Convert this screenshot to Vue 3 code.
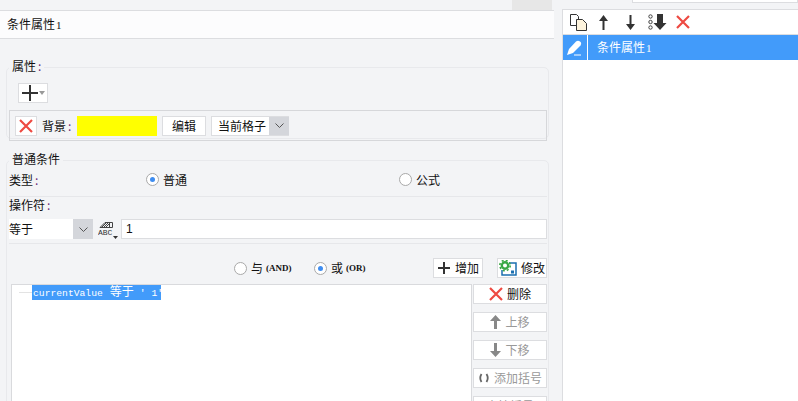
<script setup>
const tools = ['copy', 'up', 'down', 'bottom', 'del']
</script>

<template>
  <div class="page">
    <div class="top-strip">
      <div class="tab-shade"></div>
      <div class="top-box"></div>
    </div>
    <div class="main">
      <div class="left">
        <div class="title">条件属性<span class="num">1</span></div>
        <fieldset class="group attr">
          <legend>属性<span class="colon">:</span></legend>
          <button class="add-btn">
            <svg width="16" height="16" viewBox="0 0 16 16"><path d="M8 0v16M0 8h16" stroke="#333" stroke-width="2" fill="none"/></svg>
            <svg width="6" height="4" viewBox="0 0 6 4"><path d="M0 0h6L3 4z" fill="#999"/></svg>
          </button>
          <div class="bg-row">
            <span class="x-box">
              <svg width="14" height="14" viewBox="0 0 14 14"><path d="M1 1l12 12M13 1L1 13" stroke="#ee4a42" stroke-width="2.2" fill="none"/></svg>
            </span>
            <span class="bg-label">背景<span class="colon">:</span></span>
            <span class="swatch"></span>
            <span class="plain-btn">编辑</span>
            <span class="cell-select">
              <span class="cell-text">当前格子</span>
              <span class="chev">
                <svg width="9" height="5" viewBox="0 0 9 5"><path d="M.5.5l4 4 4-4" stroke="#555" fill="none"/></svg>
              </span>
            </span>
          </div>
        </fieldset>
        <fieldset class="group cond">
          <legend>普通条件</legend>
          <div class="type-row">
            <span class="type-label">类型<span class="colon">:</span></span>
            <label class="radio r-normal"><i class="dot on"></i>普通</label>
            <label class="radio r-formula"><i class="dot"></i>公式</label>
          </div>
          <div class="op-label">操作符<span class="colon">:</span></div>
          <div class="op-row">
            <span class="op-select">
              <span class="op-text">等于</span>
              <span class="chev op-chev">
                <svg width="9" height="5" viewBox="0 0 9 5"><path d="M.5.5l4 4 4-4" stroke="#555" fill="none"/></svg>
              </span>
            </span>
            <svg class="abc" width="21" height="20" viewBox="0 0 21 20">
              <path d="M2 8.500l5-5h7.500v5H2M4 8l4-4M6 8l4-4M8 8l4-4M11.500 3.500v5" stroke="#444" stroke-width="1" fill="none"/>
              <text x="0" y="16" class="abc-text">ABC</text>
              <path d="M15 17h5l-2.500 3z" fill="#333"/>
            </svg>
            <span class="op-input">1</span>
          </div>
          <div class="logic-row">
            <label class="radio r-and"><i class="dot"></i>与<span class="latin">(AND)</span></label>
            <label class="radio r-or"><i class="dot on"></i>或<span class="latin">(OR)</span></label>
            <span class="plain-btn act add">
              <svg width="14" height="14" viewBox="0 0 14 14"><path d="M7 1v12M1 7h12" stroke="#333" stroke-width="2" fill="none"/></svg>
              增加
            </span>
            <span class="plain-btn act edit">
              <svg width="18" height="16" viewBox="0 0 18 16">
                <path d="M10 3h7v12H3V10" stroke="#1b6fb0" stroke-width="1.500" fill="none"/>
                <circle cx="6" cy="5.500" r="3.200" fill="none" stroke="#3aa845" stroke-width="2.400"/>
                <circle cx="6" cy="5.500" r="5.200" fill="none" stroke="#3aa845" stroke-width="1.600" stroke-dasharray="2 2.100"/>
                <rect x="12" y="10.500" width="3" height="3" fill="#1b6fb0"/>
              </svg>
              修改
            </span>
          </div>
          <div class="tree-row">
            <div class="tree">
              <span class="tree-line"></span>
              <span class="tree-item"><span class="mono">currentValue</span><span class="cmp">等于</span><span class="mono">' 1'</span></span>
            </div>
            <div class="side">
              <span class="side-btn">
                <svg width="14" height="14" viewBox="0 0 14 14"><path d="M1 1l12 12M13 1L1 13" stroke="#ee4a42" stroke-width="2.200" fill="none"/></svg>
                删除
              </span>
              <span class="side-btn off">
                <svg width="11" height="14" viewBox="0 0 11 14"><path d="M5.500 0L11 6H7V14H4V6H0z" fill="#888"/></svg>
                上移
              </span>
              <span class="side-btn off">
                <svg width="11" height="14" viewBox="0 0 11 14"><path d="M5.500 14L11 8H7V0H4v8H0z" fill="#888"/></svg>
                下移
              </span>
              <span class="side-btn off">
                <svg width="12" height="10" viewBox="0 0 12 10"><path d="M3.500 1Q1 5 3.500 9M8.500 1q2.500 4 0 8" stroke="#666" stroke-width="1.800" fill="none"/></svg>
                添加括号
              </span>
              <span class="side-btn off clip">去掉括号</span>
            </div>
          </div>
        </fieldset>
      </div>
      <div class="right">
        <div class="toolbar">
          <template v-for="t in tools" :key="t">
            <svg v-if="t === 'copy'" class="tool t-copy" width="17" height="17" viewBox="0 0 17 17">
              <path d="M.5.500h6l2 2v9h-8z" fill="#fff" stroke="#333"/>
              <path d="M6.500 5.500h6l4 4v7h-10z" fill="#fdf3dc" stroke="#333"/>
            </svg>
            <svg v-else-if="t === 'up'" class="tool t-up" width="11" height="15" viewBox="0 0 11 15"><path d="M5.500 0L10 6H6.500V15h-2V6H1z" fill="#333"/></svg>
            <svg v-else-if="t === 'down'" class="tool t-down" width="11" height="15" viewBox="0 0 11 15"><path d="M5.500 15L10 9H6.500V0h-2v9H1z" fill="#333"/></svg>
            <svg v-else-if="t === 'bottom'" class="tool t-bottom" width="19" height="16" viewBox="0 0 19 16">
              <circle cx="2.500" cy="2.500" r="1.700" fill="none" stroke="#444"/>
              <circle cx="2.500" cy="8" r="1.700" fill="none" stroke="#444"/>
              <circle cx="2.500" cy="13.500" r="1.700" fill="none" stroke="#444"/>
              <path d="M12 16l6.500-7H15V0H9v9H5.500z" fill="#333"/>
            </svg>
            <svg v-else class="tool t-del" width="14" height="14" viewBox="0 0 14 14"><path d="M1 1l12 12M13 1L1 13" stroke="#ee4a42" stroke-width="2.200" fill="none"/></svg>
          </template>
        </div>
        <div class="list-row">
          <span class="pen">
            <svg width="16" height="16" viewBox="0 0 16 16">
              <path d="M0 15L2 9l7-7.500q2-1.500 4 0t.5 4L6 13z" fill="#fff"/>
              <path d="M7 15h7" stroke="#fff" stroke-width="1"/>
            </svg>
          </span>
          <span class="list-text">条件属性<span class="num">1</span></span>
        </div>
      </div>
    </div>
  </div>
</template>

<style scoped>
.page {
  width: 798px;
  height: 401px;
  overflow: hidden;
  background: #f3f4f6;
  font-family: "Noto Sans CJK SC", "Liberation Sans", sans-serif;
  font-size: 12px;
  color: #111;
  line-height: 14px;
}
.top-strip {
  height: 10px;
  display: flex;
  justify-content: flex-end;
  align-items: flex-start;
}
.tab-shade {
  width: 40px;
  height: 10px;
  background: #e7e7e7;
  margin-right: 80px;
}
.top-box {
  width: 166px;
  height: 3px;
  background: #fff;
  border: 1px solid #dcdde0;
  border-top: 0;
  box-sizing: border-box;
}
.main {
  display: flex;
  height: 391px;
}
.left {
  width: 554px;
  flex: none;
}
.title {
  height: 29px;
  box-sizing: border-box;
  background: #fcfcfd;
  border-top: 1px solid #dcdde0;
  border-bottom: 1px solid #dcdde0;
  padding: 0 0 0 7px;
  line-height: 25px;
}
.num {
  font-family: "Liberation Serif", serif;
  font-size: 11px;
  margin-left: 1px;
}
.colon {
  color: #6a2a7a;
  margin-left: 2px;
}
.group {
  margin: 0;
  padding: 0;
  border: 1px solid #e8e9ec;
  border-radius: 5px;
  min-inline-size: 0;
  box-sizing: border-box;
  width: 543px;
  margin-left: 6px;
}
.group legend {
  margin-left: 2px;
  padding: 0 3px;
  height: 16px;
  line-height: 14px;
}
.attr {
  margin-top: 20px;
  height: 80px;
}
.add-btn {
  width: 30px;
  height: 20px;
  margin: 8px 0 0 11px;
  padding: 0 0 0 3px;
  display: flex;
  align-items: center;
  gap: 1px;
  background: #fff;
  border: 1px solid #dcdde0;
  box-sizing: border-box;
}
.bg-row {
  margin: 7px 0 0 2px;
  width: 538px;
  height: 31px;
  box-sizing: border-box;
  border: 1px solid #d6d7da;
  display: flex;
  align-items: center;
  padding-left: 5px;
}
.x-box {
  width: 22px;
  height: 20px;
  box-sizing: border-box;
  background: #fff;
  border: 1px solid #dcdde0;
  display: flex;
  align-items: center;
  justify-content: center;
}
.bg-label {
  margin-left: 5px;
  width: 35px;
}
.swatch {
  width: 80px;
  height: 20px;
  background: #ffff00;
  margin-right: 5px;
}
.plain-btn {
  height: 20px;
  box-sizing: border-box;
  background: #fff;
  border: 1px solid #dcdde0;
  display: flex;
  align-items: center;
  justify-content: center;
  width: 44px;
}
.cell-select {
  display: flex;
  height: 20px;
  margin-left: 5px;
  width: 78px;
  box-sizing: border-box;
  background: #fff;
  border: 1px solid #dcdde0;
  border-right: 0;
}
.cell-text {
  flex: 1;
  padding-left: 6px;
  line-height: 18px;
}
.chev {
  width: 20px;
  background: #d4d6db;
  display: flex;
  align-items: center;
  justify-content: center;
}
.cond {
  margin-top: 13px;
  height: 260px;
}
.type-row {
  height: 29px;
  padding-bottom: 2px;
  margin-top: -3px;
  margin-left: 2px;
  width: 538px;
  border-bottom: 1px solid #e6e7ea;
  display: flex;
  align-items: center;
  box-sizing: content-box;
}
.type-label {
  width: 137px;
}
.radio {
  display: flex;
  align-items: center;
  gap: 4px;
}
.dot {
  width: 13px;
  height: 13px;
  box-sizing: border-box;
  border-radius: 50%;
  border: 1px solid #a9a9a9;
  background: #fff;
  display: flex;
  align-items: center;
  justify-content: center;
}
.dot.on::after {
  content: "";
  width: 5px;
  height: 5px;
  border-radius: 50%;
  background: #3f8df0;
}
.r-normal {
  width: 253px;
}
.op-label {
  height: 22px;
  line-height: 16px;
  margin-left: 2px;
}
.op-row {
  display: flex;
  align-items: center;
  height: 20px;
  margin-left: 2px;
  padding-bottom: 4px;
  width: 538px;
  border-bottom: 1px solid #e6e7ea;
  box-sizing: content-box;
}
.op-select {
  display: flex;
  width: 84px;
  height: 20px;
  background: #fff;
}
.op-text {
  flex: 1;
  line-height: 20px;
}
.op-chev {
  width: 20px;
}
.abc {
  margin-left: 5px;
  margin-right: 2px;
}
.abc-text {
  font-family: "Liberation Mono", monospace;
  font-size: 8px;
  fill: #333;
}
.op-input {
  flex: 1;
  height: 20px;
  box-sizing: border-box;
  background: #fff;
  border: 1px solid #dcdde0;
  padding-left: 4px;
  line-height: 18px;
  font-family: "Liberation Sans", sans-serif;
}
.logic-row {
  display: flex;
  align-items: center;
  height: 20px;
  margin-top: 14px;
  margin-left: 227px;
  width: 313px;
}
.latin {
  font-family: "Liberation Serif", serif;
  font-size: 9px;
  font-weight: 700;
  margin-left: -1px;
}
.r-and {
  width: 80px;
}
.r-or {
  width: 119px;
}
.act {
  gap: 4px;
  width: 50px;
}
.edit {
  margin-left: 14px;
}
.tree-row {
  display: flex;
  margin-top: 6px;
  margin-left: 4px;
  width: 536px;
  height: 130px;
}
.tree {
  width: 461px;
  flex: none;
  box-sizing: border-box;
  background: #fff;
  border: 1px solid #d9dadd;
  display: flex;
  align-items: flex-start;
  padding-left: 7px;
}
.tree-line {
  width: 13px;
  height: 1px;
  background: #e3e3e3;
  margin: 7px 0 0 0;
}
.tree-item {
  height: 15px;
  width: 129px;
  flex: none;
  background: #429bfa;
  color: #fff;
  line-height: 12px;
  white-space: nowrap;
  padding-left: 1px;
  box-sizing: border-box;
}
.mono {
  font-family: "Liberation Mono", monospace;
  font-size: 9.700px;
}
.cmp {
  margin: 0 6px 0 7px;
}
.side {
  display: flex;
  flex-direction: column;
  gap: 8px;
  width: 74px;
  margin-left: 1px;
  flex: none;
}
.side-btn {
  height: 20px;
  flex: none;
  box-sizing: border-box;
  background: #fff;
  border: 1px solid #dcdde0;
  display: flex;
  align-items: center;
  justify-content: center;
  gap: 4px;
  white-space: nowrap;
}
.off {
  color: #999;
}
.right {
  width: 236px;
  margin-left: 8px;
  flex: none;
  box-sizing: border-box;
  background: #fff;
  border: 1px solid #dcdde0;
  border-right: 0;
  border-bottom: 0;
  margin-top: -1px;
}
.toolbar {
  height: 25px;
  box-sizing: border-box;
  border-bottom: 1px solid #dcdde0;
  display: flex;
  align-items: center;
  padding-left: 7px;
}
.t-up {
  margin-left: 11px;
}
.t-down {
  margin-left: 16px;
}
.t-bottom {
  margin-left: 12px;
}
.t-del {
  margin-left: 9px;
}
.list-row {
  height: 25px;
  background: #429bfa;
  color: #fff;
  display: flex;
  align-items: center;
}
.pen {
  width: 25px;
  height: 25px;
  flex: none;
  box-sizing: border-box;
  border-right: 1px solid #fff;
  display: flex;
  align-items: center;
  justify-content: center;
}
.list-text {
  margin-left: 9px;
}
</style>
